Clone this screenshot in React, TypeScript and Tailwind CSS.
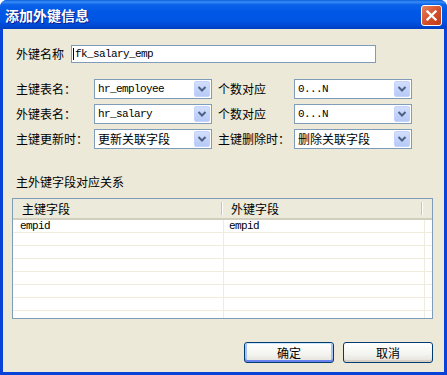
import React from 'react'

const cnFont = "font-['Noto_Sans_CJK_SC','Liberation_Sans',sans-serif]"
const monoFont = "font-['Liberation_Mono','Noto_Sans_CJK_SC',monospace] tracking-[-0.6px] text-[11px]"

const DropButton = () => (
  <div className="flex h-[16px] w-[16px] shrink-0 items-center justify-center rounded-[2px] border border-[#C3D3FD] bg-[linear-gradient(to_bottom,#D2DEFC,#B6CAF6)]">
    <svg width="10" height="8" viewBox="0 0 10 8">
      <path d="M1.5 2 L5 5.5 L8.5 2" fill="none" stroke="#4D6185" strokeWidth="2" />
    </svg>
  </div>
)

const Combo = ({ value, mono }: { value: string; mono?: boolean }) => (
  <div className="flex h-[20px] items-center border border-[#7F9DB9] bg-white pl-[3px] pr-[1px]">
    <span className={`min-w-0 flex-1 whitespace-nowrap leading-[16px] text-black ${mono ? monoFont : cnFont + ' text-[12px]'}`}>
      {value}
    </span>
    <DropButton />
  </div>
)

const Label = ({ children, className = '' }: { children: React.ReactNode; className?: string }) => (
  <span className={`whitespace-nowrap text-[12px] leading-[14px] text-black ${cnFont} ${className}`}>{children}</span>
)

const XpButton = ({ label, isDefault }: { label: string; isDefault?: boolean }) => (
  <button
    className={`flex h-[21px] w-[90px] items-center justify-center rounded-[3px] border border-[#003C74] bg-[linear-gradient(to_bottom,#FFFFFF,#F3F3EF_60%,#E3E2DA)] text-[12px] leading-none text-black ${cnFont} ${
      isDefault
        ? 'shadow-[inset_0_1px_0_#CEE7FF,inset_0_-2px_0_#6982EE,inset_2px_0_0_#A8C2F4,inset_-2px_0_0_#A8C2F4]'
        : 'shadow-[inset_0_-2px_0_#D6D0C5]'
    }`}
  >
    {label}
  </button>
)

const rows = [
  ['empid', 'empid'],
  ['', ''],
  ['', ''],
  ['', ''],
  ['', ''],
  ['', ''],
  ['', ''],
  ['', ''],
]

export default function App() {
  return (
    <div className="flex h-[375px] w-[447px] flex-col overflow-hidden rounded-t-[7px] bg-[#0842D6]">
      {/* title bar */}
      <div className="flex h-[29px] shrink-0 items-center justify-between bg-[linear-gradient(to_bottom,#0A5FDB_0%,#3A8CF6_7%,#0B63EA_16%,#0058E6_40%,#0055E3_70%,#0049D4_88%,#003FBF_100%)] pl-[5px] pr-[5px]">
        <span className={`text-[14px] font-bold leading-none text-white [text-shadow:1px_1px_0_#0A1A8A] ${cnFont}`}>
          添加外键信息
        </span>
        <div className="mt-[1px] flex h-[21px] w-[21px] items-center justify-center rounded-[3px] border border-white bg-[linear-gradient(135deg,#E9835F,#D24D28_55%,#C03A17)]">
          <svg width="11" height="11" viewBox="0 0 11 11">
            <path d="M1.5 1.5 L9.5 9.5 M9.5 1.5 L1.5 9.5" stroke="white" strokeWidth="2.3" strokeLinecap="square" />
          </svg>
        </div>
      </div>

      {/* body */}
      <div className="mx-[3px] mb-[3px] flex flex-1 flex-col bg-[#ECE9D8] pl-[9px] pr-[11px]">
        <div className="mt-[16px] flex items-center">
          <Label className="ml-[4px] w-[55px]">外键名称</Label>
          <div className="flex h-[18px] w-[305px] items-center border border-[#7F9DB9] bg-white pl-[1px]">
            <span className="mr-[1px] h-[12px] w-[1px] bg-black" />
            <span className={`leading-none text-black ${monoFont}`}>fk_salary_emp</span>
          </div>
        </div>

        <div className="ml-[4px] mt-[16px] grid grid-cols-[78px_118px_82px_118px] items-center gap-y-[5px]">
          <Label>主键表名：</Label>
          <Combo value="hr_employee" mono />
          <Label className="pl-[6px]">个数对应</Label>
          <Combo value="0...N" mono />

          <Label>外键表名：</Label>
          <Combo value="hr_salary" mono />
          <Label className="pl-[6px]">个数对应</Label>
          <Combo value="0...N" mono />

          <Label>主键更新时：</Label>
          <Combo value="更新关联字段" />
          <Label className="pl-[6px]">主键删除时：</Label>
          <Combo value="删除关联字段" />
        </div>

        <Label className="ml-[4px] mt-[26px]">主外键字段对应关系</Label>

        {/* grid */}
        <div className="mt-[9px] flex h-[121px] flex-col overflow-hidden border border-[#7F9DB9] bg-white">
          <div className="flex h-[21px] shrink-0 items-center border-b-[2px] border-[#D2CEBD] bg-[#EBEADB]">
            <div className="flex h-full w-[210px] items-center justify-between pl-[9px]">
              <Label>主键字段</Label>
              <span className="h-[13px] w-[2px] border-l border-r border-l-[#C7C5B2] border-r-white" />
            </div>
            <div className="flex h-full w-[200px] items-center justify-between pl-[8px]">
              <Label>外键字段</Label>
              <span className="h-[13px] w-[2px] border-l border-r border-l-[#C7C5B2] border-r-white" />
            </div>
          </div>
          {rows.map((r, i) => (
            <div key={i} className="flex h-[13px] shrink-0 border-b border-[#EFEBDD]">
              <div className="flex w-[211px] items-center border-r border-[#EFEBDD] pl-[7px]">
                <span className={`leading-none text-black ${monoFont}`}>{r[0]}</span>
              </div>
              <div className="flex w-[201px] items-center border-r border-[#EFEBDD] pl-[5px]">
                <span className={`leading-none text-black ${monoFont}`}>{r[1]}</span>
              </div>
            </div>
          ))}
        </div>

        <div className="mt-[23px] flex justify-end gap-[9px]">
          <XpButton label="确定" isDefault />
          <XpButton label="取消" />
        </div>
      </div>
    </div>
  )
}
